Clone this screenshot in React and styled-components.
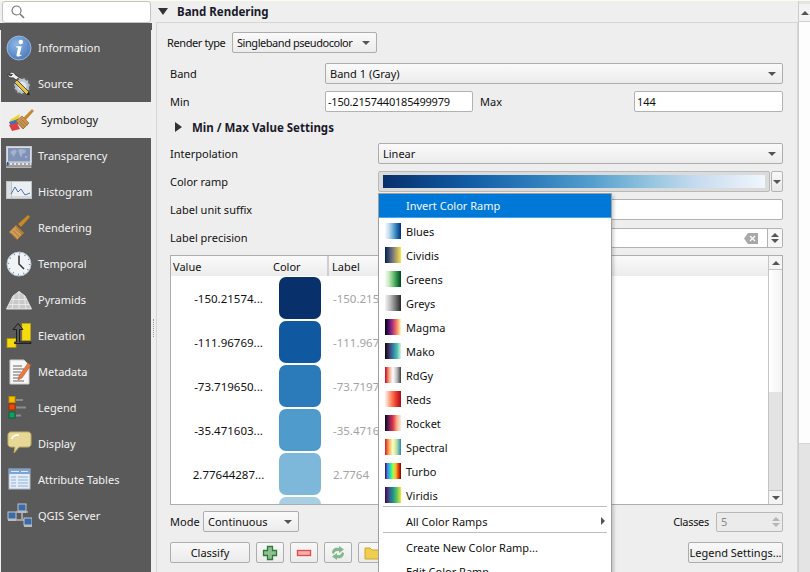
import React from "react";
import styled, { createGlobalStyle } from "styled-components";

const Global = createGlobalStyle`
  html, body { margin: 0; padding: 0; background: #f0f0f0; }
  body { font-family: "Noto Sans", "Open Sans", sans-serif; font-size: 11px; color: #111; }
  * { box-sizing: border-box; }
`;

const Window = styled.div`
  position: relative; width: 810px; height: 572px; overflow: hidden;
  display: flex; background: #efefef; border-top: 1px solid #fbfbee;
`;
const Sidebar = styled.aside`
  width: 151px; flex: none; background: #5a5a5a; border-left: 1px solid #f0f0f0;
  display: flex; flex-direction: column;
`;
const SearchArea = styled.div`
  height: 29px; margin: 0 -1px; padding: 0 1px 0 2px; 
  background: linear-gradient(#efefef 0 22px, #5a5a5a 22px);
`;
const SearchBox = styled.div`
  height: 22px; width: 149px; background: #fff; border: 1px solid #c4c4c4; border-radius: 3px;
  display: flex; align-items: center; padding-left: 8px;
`;
const NavItem = styled.div`
  height: 36px; display: flex; align-items: center; flex: none;
  gap: ${p => (p.$active ? "7px" : "6px")};
  padding-left: ${p => (p.$active ? "7px" : "5px")};
  padding-bottom: 1px;
  color: ${p => (p.$active ? "#111" : "#f2f2f2")};
  background: ${p => (p.$active ? "#eeeeee" : "transparent")};
`;
const NavIcon = styled.svg`width: 26px; height: 26px; flex: none;`;
const Splitter = styled.div`
  width: 5px; flex: none; display: flex; align-items: center; justify-content: center;
`;
const Grip = styled.div`height: 18px; width: 1px; border-left: 1px dotted #999; margin-top: 83px;`;
const Main = styled.main`width: 642px; flex: none; display: flex; flex-direction: column;`;
const GroupHeader = styled.div`
  height: 21px; flex: none; display: flex; align-items: center; gap: 9px; padding-left: 2px;
  font-weight: 700; font-size: 11.5px; color: #1a1a2a;
`;
const Panel = styled.section`
  flex: 1; border: 1px solid #d6d6d6; border-bottom: 0; background: #eeeeee;
  padding: 9px 14px 0 13px; display: flex; flex-direction: column;
`;
const Row = styled.div`
  display: flex; align-items: center; flex: none;
  height: ${p => p.$h || 21}px; margin-top: ${p => p.$mt || 0}px; margin-left: ${p => p.$ml || 0}px;
  justify-content: ${p => p.$between ? "space-between" : "flex-start"};
`;
const FieldLabel = styled.span`
  flex: none; width: ${p => (p.$w ? `${p.$w}px` : "auto")}; padding-left: ${p => p.$pl || 0}px; white-space: nowrap;
  margin-bottom: ${p => (p.$up ? "2px" : "0")};
  letter-spacing: ${p => p.$ls || 0}px;
`;
const Combo = styled.div`
  display: flex; align-items: center; justify-content: space-between;
  width: ${p => (p.$w ? `${p.$w}px` : "auto")}; flex: ${p => (p.$w ? "none" : 1)}; height: 21px;
  padding: 0 6px 0 4px; border: 1px solid #adadad; border-radius: 2px;
  background: linear-gradient(#fafafa, #ececec); white-space: nowrap;
  letter-spacing: ${p => p.$ls || 0}px;
`;
const Arrow = styled.i`
  display: block; width: 0; height: 0; flex: none;
  border-left: 4px solid transparent; border-right: 4px solid transparent;
  border-top: 4px solid #555; border-bottom: 0;
`;
const UpArrow = styled(Arrow)`border-top: 0; border-bottom: 4px solid ${p => p.$c || "#555"};`;
const DownArrow = styled(Arrow)`border-top-color: ${p => p.$c || "#555"};`;
const TextInput = styled.div`
  height: 21px; padding: 0 3px 0 2px; display: flex; align-items: center; flex: ${p => (p.$w ? "none" : 1)};
  width: ${p => (p.$w ? `${p.$w}px` : "auto")}; background: #fff; border: 1px solid #b2b2b2; border-radius: 2px;
  letter-spacing: ${p => p.$ls || 0}px;
`;
const Disclosure = styled.i`
  display: block; width: 0; height: 0; flex: none; margin-left: 5px; margin-right: 10px;
  border-top: 5px solid transparent; border-bottom: 5px solid transparent; border-left: 7px solid #333;
`;
const DownDisclosure = styled.i`
  display: block; width: 0; height: 0; flex: none;
  border-left: 5px solid transparent; border-right: 5px solid transparent; border-top: 7px solid #333;
`;
const BoldText = styled.span`font-weight: 700; font-size: 11.5px; color: #1a1a2a;`;
const RampButton = styled.div`
  flex: 1; height: 21px; padding: 3px 4px; margin-right: 1px; background: #dbdbdb;
  border: 1px solid #b9b9b9; border-radius: 2px;
`;
const RampFill = styled.div`
  height: 100%; background: linear-gradient(90deg, #08306b, #105ba4 22%, #2e7ebc 40%, #559fcd 55%, #95c5df 70%, #c6dbef 82%, #f0f6fc);
`;
const RampMore = styled.div`
  width: 12px; height: 21px; flex: none; display: flex; align-items: center; justify-content: center;
  background: linear-gradient(#f8f8f8, #e8e8e8); border: 1px solid #b4b4b4; border-radius: 2px;
`;
const SpinField = styled.div`
  flex: 1; height: 20px; display: flex; align-items: center; justify-content: flex-end;
  background: #fff; border: 1px solid #b2b2b2; border-radius: 2px;
`;
const SpinButtons = styled.div`
  width: 15px; height: 18px; flex: none; display: flex; flex-direction: column; align-items: center; justify-content: center; gap: 2px;
  border-left: 1px solid #b2b2b2; background: #f6f6f6;
`;
const ClearIcon = styled.svg`width: 14px; height: 11px; margin-right: 9px;`;
const Table = styled.div`
  flex: none; height: 250px; margin-top: 7px; display: flex; overflow: hidden;
  background: #fff; border: 1px solid #adadad;
`;
const TableBody = styled.div`flex: 1; min-width: 0; display: flex; flex-direction: column; overflow: hidden;`;
const TableHeader = styled.div`
  height: 20px; flex: none; display: flex; align-items: center;
  background: linear-gradient(#fafafa, #ececec);
`;
const HeaderCell = styled.div`
  width: ${p => p.$w}px; height: 100%; flex: none; display: flex; align-items: center;
  padding-left: ${p => p.$pl}px; border-right: ${p => (p.$line ? "2px solid #cfcfcf" : "0")};
`;
const TableRow = styled.div`height: 44px; flex: none; display: flex; align-items: center;`;
const ValueCell = styled.div`width: 99px; flex: none; padding-left: 16px; text-align: center; font-size: 11.5px;`;
const SwatchCell = styled.div`width: 59px; flex: none; display: flex; justify-content: center;`;
const Swatch = styled.div`width: 42px; height: 42px; border-radius: 7px; background: ${p => p.$c};`;
const LabelCell = styled.div`padding-left: 4px; color: #a3a3a3; font-size: 11.5px;`;
const VScroll = styled.div`
  width: 14px; flex: none; display: flex; flex-direction: column;
  border-left: 1px solid #c4c4c4; background: #e3e3e3;
`;
const ScrollBtn = styled.div`
  height: 14px; flex: none; display: flex; align-items: center; justify-content: center; background: #f4f4f4;
  border-${p => (p.$end ? "top" : "bottom")}: 1px solid #c4c4c4;
`;
const ScrollThumb = styled.div`height: ${p => p.$h}px; flex: none; background: linear-gradient(90deg, #fff, #f3f3f3);`;
const Spacer = styled.div`flex: 1;`;
const RightGroup = styled.div`display: flex; align-items: center;`;
const DisabledSpin = styled.div`
  width: 67px; height: 20px; margin-left: 7px; display: flex; align-items: center; justify-content: space-between;
  padding-left: 4px; background: #ebebeb; color: #888; border: 1px solid #b8b8b8; border-radius: 2px;
`;
const DisabledArrows = styled.div`width: 13px; display: flex; flex-direction: column; align-items: center; gap: 2px;`;
const PushButton = styled.div`
  width: ${p => p.$w}px; height: 21px; flex: none; margin-right: ${p => p.$mr || 0}px;
  display: flex; align-items: center; justify-content: center; white-space: nowrap;
  background: linear-gradient(#f8f8f8, #ebebeb); border: 1px solid #adadad; border-radius: 2px;
`;
const ToolIcon = styled.svg`width: 16px; height: 16px;`;
const OuterScroll = styled.div`
  width: 12px; flex: none; display: flex; flex-direction: column;
  padding-top: 3px; background: #e4e4e4; border-left: 1px solid #cdcdcd;
`;
const OuterBtn = styled.div`
  height: 18px; flex: none; display: flex; align-items: center; justify-content: center;
  background: #f3f3f3; border-bottom: 1px solid #cfcfcf;
`;
const OuterThumb = styled.div`height: 422px; flex: none; background: #fdfdfd; border-bottom: 1px solid #d5d5d5;`;
const Menu = styled.div`
  position: absolute; left: 378px; top: 192px; width: 234px; height: 400px;
  background: #fff; border: 1px solid #a0a0a0; box-shadow: 2px 2px 3px rgba(0,0,0,.18);
`;
const MenuHighlight = styled.div`
  height: 24px; display: flex; align-items: center; padding-left: 27px; margin-bottom: 1px;
  background: #0078d7; color: #f4f8fc; border-bottom: 1px solid #4aa6ea;
`;
const MenuItem = styled.div`
  height: 24px; display: flex; align-items: center; justify-content: space-between; padding: 0 6px 0 27px; color: #111;
`;
const RampItem = styled.div`
  height: 24px; display: flex; align-items: center; gap: 5px; padding-left: 6px; color: #111;
`;
const RampIcon = styled.div`width: 16px; height: 16px; flex: none; background: linear-gradient(90deg, ${p => p.$g});`;
const Separator = styled.div`height: 1px; margin: -1px 4px 2px; background: #bdbdbd;`;
const SubArrow = styled.i`
  display: block; width: 0; height: 0;
  border-top: 4px solid transparent; border-bottom: 4px solid transparent; border-left: 4px solid #555;
`;

const icons = {
  info: (
    <>
      <defs><radialGradient id="ig" cx=".4" cy=".35" r=".75"><stop offset="0" stopColor="#8fb8e6" /><stop offset="1" stopColor="#4474b8" /></radialGradient></defs>
      <circle cx="13" cy="13" r="12" fill="url(#ig)" stroke="#a8c4e4" strokeWidth=".8" />
      <circle cx="14.8" cy="7" r="2.3" fill="#fff" />
      <path d="M10.5 11.2h5.2l-2 8c-.2.9.4 1 1.8.3l-.2 1.2c-2.6 1.2-5.2 1.2-4.8-1l1.5-7-1.8-.2z" fill="#fff" />
    </>
  ),
  source: (
    <>
      <path d="M3 3c2-2.500 5-2 6 .5l7 5-2 3-7-4.800C4 7.500 1.500 5.500 2 3.500l3 1.500 1.500-1.500z" fill="#f0f0f0" stroke="#222" strokeWidth=".7" />
      <circle cx="16" cy="15" r="8" fill="#b8c4d0" stroke="#666" strokeDasharray="3 1.500" strokeWidth="2" />
      <circle cx="16" cy="15" r="4.500" fill="#dfe6ee" />
      <path d="M11 9l12 12-2.500 2.500L8.500 11.500z" fill="#e5c340" stroke="#333" strokeWidth=".8" />
      <path d="M20.500 23.500L23 21l.8 3.300z" fill="#222" />
    </>
  ),
  symbology: (
    <>
      <path d="M2 13l10-6-2 6-8 3z" fill="#f0d020" />
      <path d="M1 15l9-3 0 5-7 3z" fill="#3a72c8" />
      <path d="M1 18l8-2 3 6-8 2z" fill="#e04040" />
      <path d="M8 14l6-5 7 7-6 6z" fill="#c89450" stroke="#9a6a28" strokeWidth=".7" />
      <path d="M9.500 16l6 6M11.500 14.300l6 6M13.500 12.500l6 6" stroke="#8d6224" strokeWidth=".6" />
      <path d="M16 10.500L24 2.500l1.500 1.500-7.500 8.500z" fill="#c98a28" stroke="#a56a14" strokeWidth=".5" />
    </>
  ),
  transparency: (
    <>
      <rect x=".5" y="3.500" width="25" height="16" fill="#d8dde3" stroke="#c4c8cc" />
      <rect x="2" y="5" width="22" height="13.500" fill="#7f93b8" />
      <path d="M5 8l4-1.500 2 2-2 3-1.500 3-1-3-2-1zM12 7l3-1 5 1-1 3-3 1 0 3-2-1-1-3zM19 13l2 0 0 2-2 0z" fill="#a4b2cc" />
      <rect x=".5" y="20" width="25" height="2.500" fill="#e4e4e4" />
      <path d="M2 21h22" stroke="#666" strokeDasharray="2 2" />
      <rect x="1" y="19" width="1.500" height="3.500" fill="#2d50a0" />
      <rect y="23.500" width="25.500" height="1.200" fill="#d8d8d8" />
    </>
  ),
  histogram: (
    <>
      <rect x=".5" y="2.500" width="25" height="17" fill="#eceff2" stroke="#bfc3c8" />
      <rect x=".5" y="2.500" width="5" height="17" fill="#dde0e3" stroke="#bfc3c8" />
      <path d="M5 15l4-7 3 5 3-3 4 6 5-2" fill="none" stroke="#4e72a8" />
      <path d="M5 18h20" stroke="#c0c0c0" />
    </>
  ),
  rendering: (
    <>
      <path d="M3 17l7-7 8 8-7 7z" fill="#cf9c5c" stroke="#8d6224" strokeWidth=".7" />
      <path d="M5 18l7 7M7 15.500l7.500 7.500M9.300 13.500l7 7" stroke="#8d6224" strokeWidth=".6" />
      <path d="M12 9l10-9 2 2-9 10z" fill="#c98a28" stroke="#9a6a18" strokeWidth=".5" />
      <path d="M10 10l8 8-2 1-7-8z" fill="#a97a32" />
    </>
  ),
  temporal: (
    <>
      <circle cx="13" cy="13" r="12" fill="#f1f4f7" stroke="#bcc6d2" />
      <circle cx="13" cy="13" r="10.500" fill="none" stroke="#5f80b0" strokeWidth="1.400" strokeDasharray=".9 4.600" />
      <path d="M13 4.500V13l5 5" fill="none" stroke="#333" strokeWidth="1.500" />
    </>
  ),
  pyramids: (
    <>
      <path d="M.5 22L7 9l6-4.500L19 9l6.500 13z" fill="#c9c9c9" stroke="#e4e4e4" />
      <path d="M5 12.500h16M3 17.500h20M8 8.500L6 22M13 4.500V22M18 8.500L20 22" stroke="#efefef" strokeWidth=".8" fill="none" />
    </>
  ),
  elevation: (
    <>
      <rect x="16" y=".5" width="8.500" height="17" fill="#f2dc10" stroke="#c8a800" strokeWidth=".6" />
      <rect x="1" y="15.500" width="9" height="9" fill="#f2dc10" stroke="#b09400" strokeWidth=".8" />
      <path d="M12 .5L7 6.500h3.500V19H8.500v1.500H25V19H13.500V6.500H17z" fill="#5a5a5a" stroke="#111" strokeWidth=".8" />
    </>
  ),
  metadata: (
    <>
      <path d="M4 1h14l5 5v19H4z" fill="#f7f7f7" stroke="#ccc" />
      <path d="M7 7h9M7 10h11M7 13h8M7 16h9M7 19h7M7 22h11" stroke="#555" strokeWidth=".9" />
      <path d="M22 4l3 2-9 13-4 2 1-4z" fill="#e87a40" stroke="#a85028" strokeWidth=".5" />
    </>
  ),
  legend: (
    <>
      <rect x="3" y="1.500" width="6" height="6" fill="#f5c000" stroke="#c09000" />
      <rect x="3" y="9" width="6" height="6" fill="#e84a10" stroke="#a03000" />
      <rect x="3" y="17" width="6" height="6" fill="#10a060" stroke="#086038" />
      <path d="M10 5h7M10 12.500h10M10 20.500h5" stroke="#8c8c8c" strokeWidth="1.800" />
    </>
  ),
  display: (
    <>
      <path d="M5 1h17c2 0 3 1.500 3 3v9c0 2-1.500 3-3 3H13l-5 6 1-6H5c-2 0-3-1.500-3-3V4c0-1.500 1-3 3-3z" fill="#e8d898" stroke="#c2ae62" />
      <path d="M6 8c0-3 2-4 7-4" fill="none" stroke="#fff" strokeWidth="1.500" />
    </>
  ),
  table: (
    <g transform="translate(0 -1)">
      <rect x="3" y="3" width="21" height="20" fill="#e4ecf6" stroke="#aeb8c4" />
      <rect x="3" y="3" width="21" height="5" fill="#7ba3d4" />
      <path d="M5 5.500h8M15 5.500h7" stroke="#dce8f6" />
      <path d="M5 11h5M12 11h10M5 14h5M12 14h10M5 17h5M12 17h10M5 20h5M12 20h10" stroke="#8eb0d8" />
    </g>
  ),
  server: (
    <>
      <path d="M10 9h12M16 9v7M8 17h12" stroke="#e6e6e6" />
      <rect x="12" y="1" width="8" height="7" fill="#3a6aa8" stroke="#bcc4cc" />
      <rect x="12" y="8" width="8" height="2" fill="#b8bcc0" />
      <rect x="2" y="9" width="8" height="7" fill="#3a6aa8" stroke="#bcc4cc" />
      <rect x="2" y="16" width="8" height="2" fill="#b8bcc0" />
      <rect x="18" y="15" width="8" height="7" fill="#3a6aa8" stroke="#bcc4cc" />
      <rect x="18" y="22" width="8" height="2" fill="#b8bcc0" />
    </>
  ),
};

const nav = [
  ["Information", "info"], ["Source", "source"], ["Symbology", "symbology", true],
  ["Transparency", "transparency"], ["Histogram", "histogram"], ["Rendering", "rendering"],
  ["Temporal", "temporal"], ["Pyramids", "pyramids"], ["Elevation", "elevation"],
  ["Metadata", "metadata"], ["Legend", "legend"], ["Display", "display"],
  ["Attribute Tables", "table"], ["QGIS Server", "server"],
];

const rows = [
  ["-150.21574...", "#08306b", "-150.2157"],
  ["-111.96769...", "#10589f", "-111.9677"],
  ["-73.719650...", "#2b7bba", "-73.7197"],
  ["-35.471603...", "#4f9bcb", "-35.4716"],
  ["2.77644287...", "#7db8da", "2.7764"],
  ["", "#a9cfe5", ""],
];

const ramps = [
  ["Blues", "#f7fbff, #c6dbef, #6baed6, #2171b5, #08306b"],
  ["Cividis", "#00224e, #3d4d6e, #7c7b78, #bcae6a, #fee838"],
  ["Greens", "#f7fcf5, #c7e9c0, #74c476, #238b45, #00441b"],
  ["Greys", "#f5f5f5, #bdbdbd, #737373, #252525"],
  ["Magma", "#000004, #51127c, #b73779, #fc8961, #fcfdbf"],
  ["Mako", "#0b0405, #3e356b, #357ba3, #49c1ad, #def5e5"],
  ["RdGy", "#ca0020, #f4a582, #ffffff, #bababa, #404040"],
  ["Reds", "#fff5f0, #fcae91, #fb6a4a, #de2d26, #a50f15"],
  ["Rocket", "#03051a, #701f57, #e13342, #f6b48f, #faebdd"],
  ["Spectral", "#d7191c, #fdae61, #ffffbf, #abdda4, #2b83ba"],
  ["Turbo", "#30123b, #4686fb, #1ae4b6, #a2fc3c, #fabb3a, #e4460a, #7a0403"],
  ["Viridis", "#440154, #3b528b, #21918c, #5ec962, #fde725"],
];

export default function App() {
  return (
    <Window>
      <Global />
      <Sidebar>
        <SearchArea>
          <SearchBox>
            <svg width="14" height="14" viewBox="0 0 14 14" fill="none" stroke="#777" strokeWidth="1.200">
              <circle cx="5.500" cy="5.500" r="4.500" /><path d="M9 9l4 4" strokeWidth="1.600" />
            </svg>
          </SearchBox>
        </SearchArea>
        {nav.map(([label, key, active]) => (
          <NavItem key={label} $active={active}>
            <NavIcon viewBox="0 0 26 26">{icons[key]}</NavIcon>
            {label}
          </NavItem>
        ))}
      </Sidebar>
      <Splitter><Grip /></Splitter>
      <Main>
        <GroupHeader><DownDisclosure />Band Rendering</GroupHeader>
        <Panel>
          <Row $ml={-3}>
            <FieldLabel $w={65} $ls={-0.4}>Render type</FieldLabel>
            <Combo $w={145} $ls={-0.45}>Singleband pseudocolor<Arrow /></Combo>
          </Row>
          <Row $mt={10}>
            <FieldLabel $w={155}>Band</FieldLabel>
            <Combo>Band 1 (Gray)<Arrow /></Combo>
          </Row>
          <Row $mt={7}>
            <FieldLabel $w={155}>Min</FieldLabel>
            <TextInput $w={148} $ls={-0.2}>-150.2157440185499979</TextInput>
            <FieldLabel $w={161} $pl={7}>Max</FieldLabel>
            <TextInput>144</TextInput>
          </Row>
          <Row $mt={7} $h={16}><Disclosure /><BoldText>Min / Max Value Settings</BoldText></Row>
          <Row $mt={8}>
            <FieldLabel $w={208}>Interpolation</FieldLabel>
            <Combo>Linear<Arrow /></Combo>
          </Row>
          <Row $mt={7}>
            <FieldLabel $w={208}>Color ramp</FieldLabel>
            <RampButton><RampFill /></RampButton>
            <RampMore><Arrow /></RampMore>
          </Row>
          <Row $mt={7}>
            <FieldLabel $w={208}>Label unit suffix</FieldLabel>
            <TextInput />
          </Row>
          <Row $mt={8} $h={20}>
            <FieldLabel $w={208} $up>Label precision</FieldLabel>
            <SpinField>
              <ClearIcon viewBox="0 0 14 11">
                <path d="M4 0h10v11H4L0 5.500z" fill="#a8a8a8" />
                <path d="M6 3l5 5M11 3l-5 5" stroke="#fff" strokeWidth="1.200" />
              </ClearIcon>
              <SpinButtons><UpArrow /><DownArrow /></SpinButtons>
            </SpinField>
          </Row>
          <Table>
            <TableBody>
              <TableHeader>
                <HeaderCell $w={99} $pl={2}>Value</HeaderCell>
                <HeaderCell $w={59} $pl={3} $line>Color</HeaderCell>
                <HeaderCell $w={100} $pl={3}>Label</HeaderCell>
              </TableHeader>
              {rows.map(([v, c, l], i) => (
                <TableRow key={i}>
                  <ValueCell>{v}</ValueCell>
                  <SwatchCell><Swatch $c={c} /></SwatchCell>
                  <LabelCell>{l}</LabelCell>
                </TableRow>
              ))}
            </TableBody>
            <VScroll>
              <ScrollBtn><UpArrow /></ScrollBtn>
              <ScrollThumb $h={122} />
              <Spacer />
              <ScrollBtn $end><DownArrow /></ScrollBtn>
            </VScroll>
          </Table>
          <Row $mt={6} $between>
            <RightGroup>
              <FieldLabel $w={33}>Mode</FieldLabel>
              <Combo $w={96}>Continuous<Arrow /></Combo>
            </RightGroup>
            <RightGroup>
              <FieldLabel $ls={-0.3}>Classes</FieldLabel>
              <DisabledSpin>5<DisabledArrows><UpArrow $c="#b5b5b5" /><DownArrow $c="#b5b5b5" /></DisabledArrows></DisabledSpin>
            </RightGroup>
          </Row>
          <Row $mt={10} $between>
            <RightGroup>
              <PushButton $w={80} $mr={6}>Classify</PushButton>
              <PushButton $w={28} $mr={6}>
                <ToolIcon viewBox="0 0 16 16"><path d="M5.500 1.500h5v4h4v5h-4v4h-5v-4h-4v-5h4z" fill="#8fbf8f" stroke="#2e7a3c" strokeWidth="1.300" /></ToolIcon>
              </PushButton>
              <PushButton $w={28} $mr={6}>
                <ToolIcon viewBox="0 0 16 16"><rect x="1.500" y="5.500" width="13" height="5" fill="#f2b0b0" stroke="#e84848" strokeWidth="1.300" /></ToolIcon>
              </PushButton>
              <PushButton $w={28} $mr={6}>
                <ToolIcon viewBox="0 0 16 16"><path d="M2 8c0-4 3-6 7-5V1l5 3.500L9 8V6C6 5.500 4.500 6.500 4 9zM14 8c0 4-3 6-7 5v2L2 11.500 7 8v2c3 .5 4.500-.5 5-3z" fill="#86b890" /></ToolIcon>
              </PushButton>
              <PushButton $w={28}>
                <ToolIcon viewBox="0 0 16 16"><path d="M1 3h5l2 2h7v9H1z" fill="#f0cf50" stroke="#c8a830" /></ToolIcon>
              </PushButton>
            </RightGroup>
            <PushButton $w={95}>Legend Settings...</PushButton>
          </Row>
        </Panel>
      </Main>
      <OuterScroll>
        <OuterBtn><UpArrow /></OuterBtn>
        <OuterThumb />
      </OuterScroll>
      <Menu>
        <MenuHighlight>Invert Color Ramp</MenuHighlight>
        {ramps.map(([name, g]) => (
          <RampItem key={name}><RampIcon $g={g} />{name}</RampItem>
        ))}
        <Separator />
        <MenuItem>All Color Ramps<SubArrow /></MenuItem>
        <Separator />
        <MenuItem>Create New Color Ramp...</MenuItem>
        <MenuItem>Edit Color Ramp...</MenuItem>
      </Menu>
    </Window>
  );
}
